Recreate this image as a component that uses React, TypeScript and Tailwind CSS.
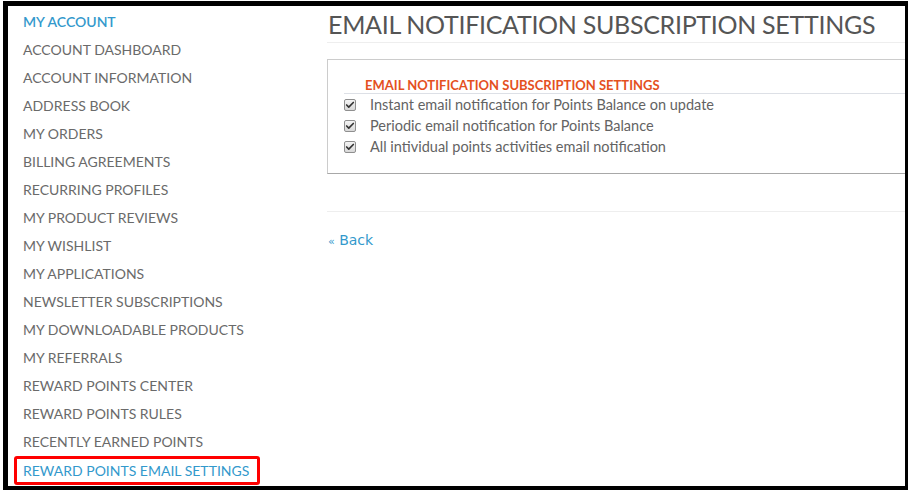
import { Check } from 'lucide-react';

const menu = [
   'ACCOUNT DASHBOARD',
   'ACCOUNT INFORMATION',
   'ADDRESS BOOK',
   'MY ORDERS',
   'BILLING AGREEMENTS',
   'RECURRING PROFILES',
   'MY PRODUCT REVIEWS',
   'MY WISHLIST',
   'MY APPLICATIONS',
   'NEWSLETTER SUBSCRIPTIONS',
   'MY DOWNLOADABLE PRODUCTS',
   'MY REFERRALS',
   'REWARD POINTS CENTER',
   'REWARD POINTS RULES',
   'RECENTLY EARNED POINTS',
];

const options = [
   'Instant email notification for Points Balance on update',
   'Periodic email notification for Points Balance',
   'All intividual points activities email notification',
];

function CheckBox() {
   return (
      <span className="flex h-[12px] w-[12px] items-center justify-center rounded-[2px] border border-[#8f8f8f] bg-gradient-to-b from-[#f4f4f4] to-[#d8d8d8]">
         <Check className="h-[10px] w-[10px] text-[#333]" strokeWidth={4} />
      </span>
   );
}

export default function App() {
   return (
      <div className="h-[490px] w-[908px] overflow-hidden bg-white pl-[3px] pt-[1px] font-['Lato',sans-serif]">
         <div className="flex h-[489px] w-[905px] border-b-[4px] border-l-[5px] border-r-[3px] border-t-[5px] border-black">
            <aside className="w-[319px] shrink-0 pl-[15px] pt-[2px] text-[14px] leading-[28px] text-[#6a6a6a]">
               <div className="font-semibold text-[#3399cc]">MY ACCOUNT</div>
               {menu.map((item) => (
                  <div key={item}>{item}</div>
               ))}
               <div className="-ml-[9px] inline-block rounded-[3px] border-[3px] border-[#ff0000] pl-[6px] pr-[8px] leading-[23px] text-[#3399cc]">
                  REWARD POINTS EMAIL SETTINGS
               </div>
            </aside>

            <main className="min-w-0 flex-1">
               <h1 className="whitespace-nowrap border-b border-[#eeeeee] pl-[1px] text-[25px] leading-[36px] tracking-[-0.3px] text-[#555]">
                  EMAIL NOTIFICATION SUBSCRIPTION SETTINGS
               </h1>

               <div className="mt-[16px] border-b border-l border-t border-b-[#a8a8a8] border-l-[#cccccc] border-t-[#cccccc] pb-[16px] pl-[16px] pt-[17px]">
                  <h2 className="border-b border-[#dde0e6] pl-[21px] text-[13px] font-bold leading-[16px] text-[#e4501e]">
                     EMAIL NOTIFICATION SUBSCRIPTION SETTINGS
                  </h2>
                  {options.map((opt) => (
                     <div
                        key={opt}
                        className="flex items-center gap-[14px] text-[14.5px] leading-[21px] text-[#636363]"
                     >
                        <CheckBox />
                        <span>{opt}</span>
                     </div>
                  ))}
               </div>

               <div className="mt-[37px] border-t border-[#eeeeee] pl-[1px] pt-[18px] font-['DejaVu_Sans',sans-serif] text-[14px] leading-[20px] text-[#3399cc]">
                  <span className="text-[11px]">«</span> Back
               </div>
            </main>
         </div>
      </div>
   );
}
